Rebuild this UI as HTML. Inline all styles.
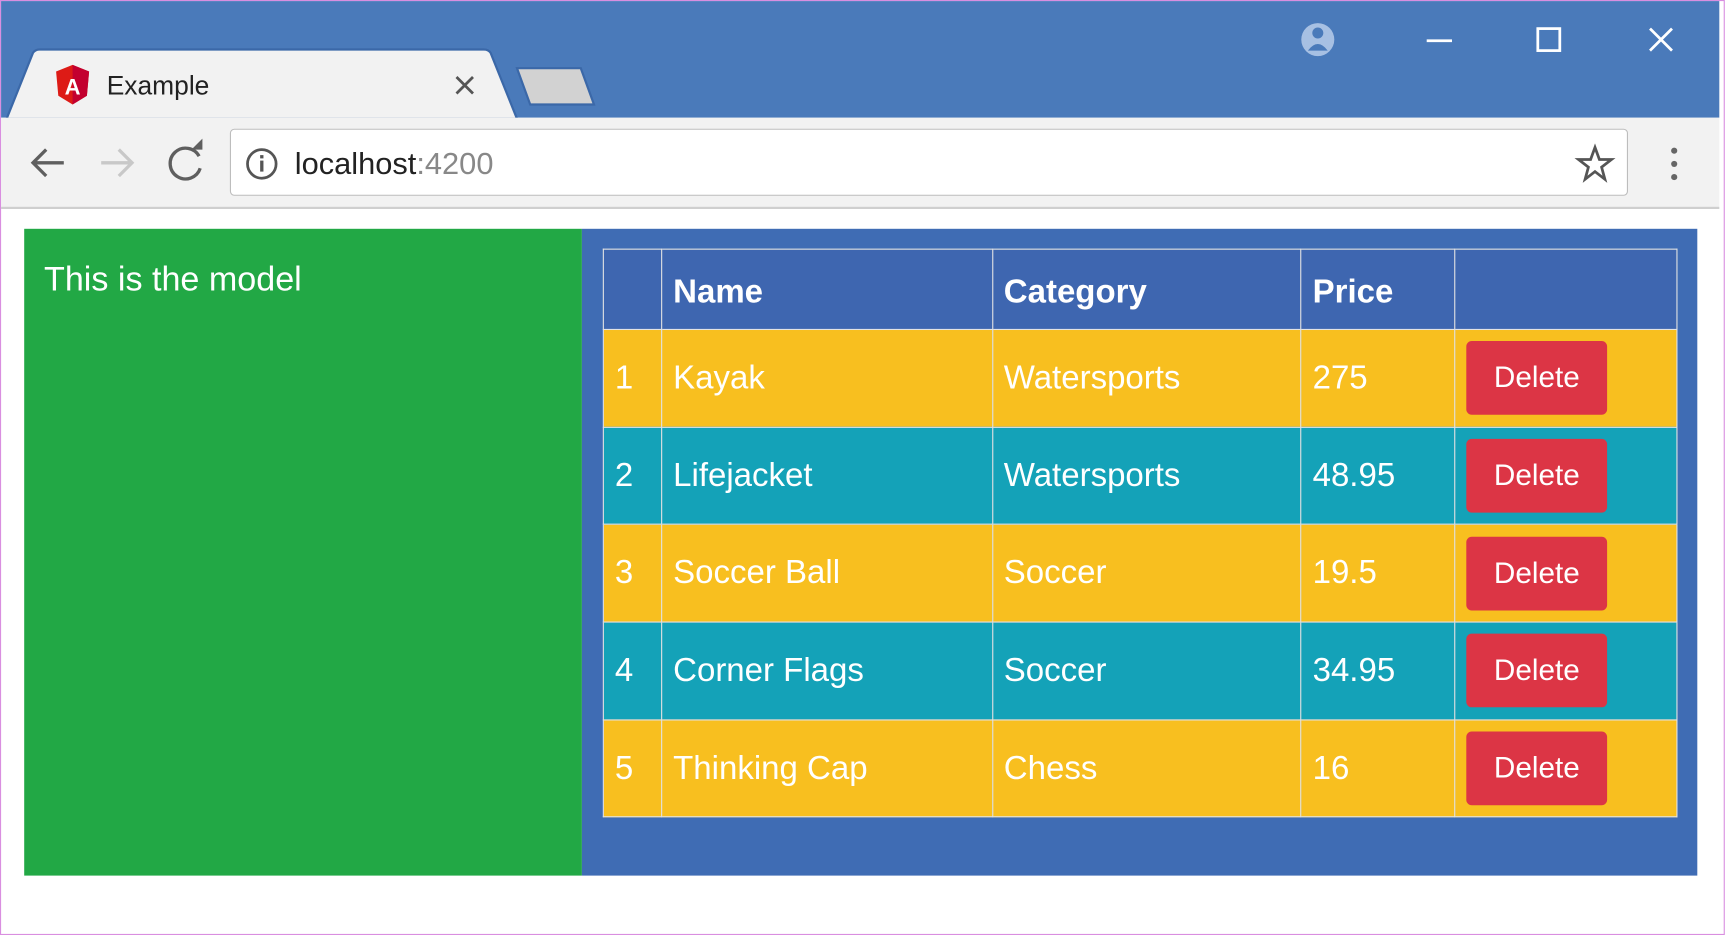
<!DOCTYPE html>
<html><head><meta charset="utf-8"><style>
html,body{margin:0;padding:0;width:1725px;height:935px;overflow:hidden;background:#fff}
#s{position:absolute;left:0;top:0;width:1568px;height:850px;transform:scale(1.1);transform-origin:0 0;font-family:"Liberation Sans",sans-serif}
.a{position:absolute}
table{position:absolute;left:548px;top:226px;width:977px;border-collapse:collapse;color:#fff;font-size:30px}
td,th{border:1.5px solid #e3e3e3;padding:0 0 0 10px;text-align:left;vertical-align:middle}
th{height:66px;background:#3e66b0;font-weight:bold;padding-top:6px}
tr.y td{background:#f8bf1f;height:87.7px}
tr.t td{background:#14a2b8;height:87.7px}
.b{display:inline-block;width:128px;height:67px;line-height:67px;background:#dc3545;border-radius:5px;text-align:center;font-size:27px}
</style></head><body><div id="s">
<div class="a" style="left:0;top:0;width:1566px;height:848px;border:1px solid #d98ee0"></div>
<div class="a" style="left:1px;top:1px;width:1562px;height:106px;background:#4a7aba"></div>
<svg class="a" style="left:0;top:0" width="1568" height="110">
<path d="M6 108 L30 48 Q32 45 36 45 L440 45 Q444 45 446 48 L470 108 Z" fill="#f2f2f2" stroke="#3b68a8" stroke-width="2"/>
<path d="M470 62 L528 62 L540 95 L482 95 Z" fill="#d2d2d2" stroke="#3b68a8" stroke-width="2"/>
<path d="M66 59 L81 65 L79 87 L66 95 L53 87 L51 65 Z" fill="#dd1b16"/>
<path d="M66 59 L81 65 L79 87 L66 95 Z" fill="#c3002f"/>
<text x="66" y="86" fill="#fff" font-size="20" font-weight="bold" text-anchor="middle" font-family="Liberation Sans">A</text>
<text x="97" y="86" fill="#222" font-size="24" font-family="Liberation Sans">Example</text>
<path d="M415 70 L430 85 M430 70 L415 85" stroke="#555" stroke-width="2.5"/>
<circle cx="1198" cy="36" r="15" fill="#a7c0e3"/><circle cx="1198" cy="30" r="5" fill="#4a7aba"/><path d="M1189 46 Q1198 34 1207 46" fill="#4a7aba"/>
<path d="M1297 37 H1320" stroke="#fff" stroke-width="2.5"/>
<rect x="1398" y="26" width="20" height="20" fill="none" stroke="#fff" stroke-width="2.5"/>
<path d="M1500 26 L1520 46 M1520 26 L1500 46" stroke="#fff" stroke-width="2.5"/>
</svg>
<div class="a" style="left:1px;top:107px;width:1562px;height:81px;background:#f2f2f2;border-bottom:2px solid #cfcfcf"></div>
<div class="a" style="left:209px;top:117px;width:1269px;height:59px;background:#fff;border:1.5px solid #bdbdbd;border-radius:4px"></div>
<svg class="a" style="left:0;top:107px" width="1568" height="82">
<path d="M58 41 H30 M42 29 L30 41 L42 53" stroke="#5f5f5f" stroke-width="3" fill="none"/>
<path d="M92 41 H120 M108 29 L120 41 L108 53" stroke="#c8c8c8" stroke-width="3" fill="none"/>
<path d="M181 35 A14 14 0 1 0 182 46" stroke="#5f5f5f" stroke-width="3" fill="none"/><path d="M174 29 L184 29 L184 19 Z" fill="#5f5f5f"/>
<path d="M1450 27 L1454 38 L1465 38 L1456 45 L1459 56 L1450 49 L1441 56 L1444 45 L1435 38 L1446 38 Z" fill="none" stroke="#555" stroke-width="2.5"/>
<circle cx="1522" cy="30" r="2.8" fill="#666"/><circle cx="1522" cy="42" r="2.8" fill="#666"/><circle cx="1522" cy="54" r="2.8" fill="#666"/>
</svg>
<svg class="a" style="left:222px;top:133px" width="32" height="32"><circle cx="16" cy="16" r="13" fill="none" stroke="#555" stroke-width="2.5"/><rect x="14.5" y="13" width="3" height="10" fill="#555"/><rect x="14.5" y="8" width="3" height="3" fill="#555"/></svg>
<div class="a" style="left:268px;top:133px;font-size:28px;color:#222">localhost<span style="color:#888">:4200</span></div>
<div class="a" style="left:22px;top:208px;width:507px;height:588px;background:#22a845"></div>
<div class="a" style="left:40px;top:236px;font-size:31px;color:#fff">This is the model</div>
<div class="a" style="left:529px;top:208px;width:1014px;height:588px;background:#3f6cb4"></div>
<table>
<colgroup><col style="width:53px"><col style="width:301px"><col style="width:281px"><col style="width:140px"><col style="width:202px"></colgroup>
<tr><th></th><th>Name</th><th>Category</th><th>Price</th><th></th></tr>
<tr class="y"><td>1</td><td>Kayak</td><td>Watersports</td><td>275</td><td><span class="b">Delete</span></td></tr>
<tr class="t"><td>2</td><td>Lifejacket</td><td>Watersports</td><td>48.95</td><td><span class="b">Delete</span></td></tr>
<tr class="y"><td>3</td><td>Soccer Ball</td><td>Soccer</td><td>19.5</td><td><span class="b">Delete</span></td></tr>
<tr class="t"><td>4</td><td>Corner Flags</td><td>Soccer</td><td>34.95</td><td><span class="b">Delete</span></td></tr>
<tr class="y"><td>5</td><td>Thinking Cap</td><td>Chess</td><td>16</td><td><span class="b">Delete</span></td></tr>
</table>
</div></body></html>
